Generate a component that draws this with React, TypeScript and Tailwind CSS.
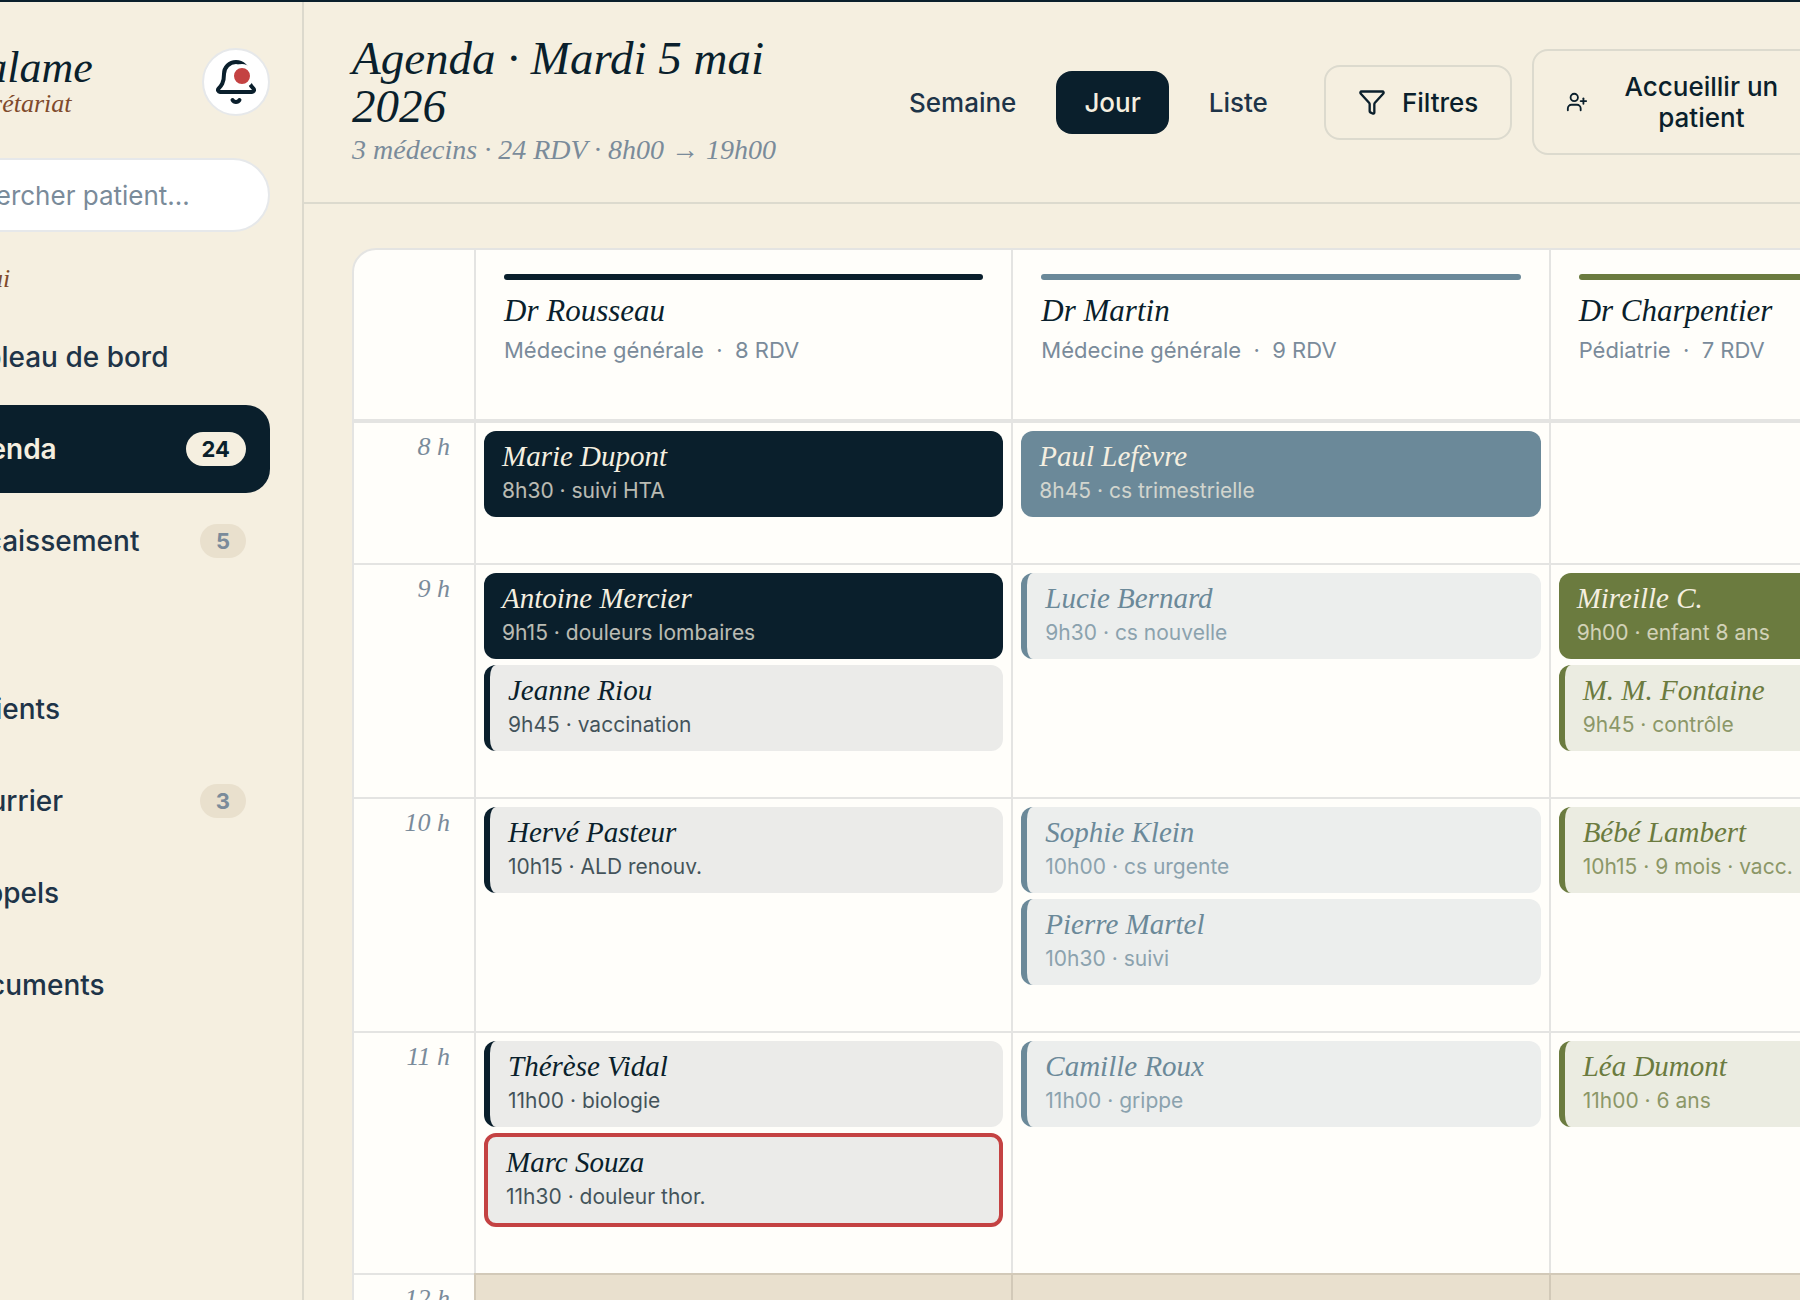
import clsx from "clsx";
import { Bell, Funnel, UserPlus } from "lucide-react";

const serif = "font-['Liberation_Serif',serif] italic";

type Tone = "navy" | "blue" | "green";

type Appointment = {
  name: string;
  time: string;
  reason: string;
  variant?: "solid" | "light" | "urgent";
};

const doctors: { name: string; specialty: string; count: number; tone: Tone }[] = [
  { name: "Dr Rousseau", specialty: "Médecine générale", count: 8, tone: "navy" },
  { name: "Dr Martin", specialty: "Médecine générale", count: 9, tone: "blue" },
  { name: "Dr Charpentier", specialty: "Pédiatrie", count: 7, tone: "green" },
];

// One array per doctor, in the same order as `doctors`.
const hours: { label: string; pause?: boolean; slots: Appointment[][] }[] = [
  {
    label: "8 h",
    slots: [
      [{ name: "Marie Dupont", time: "8h30", reason: "suivi HTA", variant: "solid" }],
      [{ name: "Paul Lefèvre", time: "8h45", reason: "cs trimestrielle", variant: "solid" }],
      [],
    ],
  },
  {
    label: "9 h",
    slots: [
      [
        { name: "Antoine Mercier", time: "9h15", reason: "douleurs lombaires", variant: "solid" },
        { name: "Jeanne Riou", time: "9h45", reason: "vaccination" },
      ],
      [{ name: "Lucie Bernard", time: "9h30", reason: "cs nouvelle" }],
      [
        { name: "Mireille C.", time: "9h00", reason: "enfant 8 ans", variant: "solid" },
        { name: "M. M. Fontaine", time: "9h45", reason: "contrôle" },
      ],
    ],
  },
  {
    label: "10 h",
    slots: [
      [{ name: "Hervé Pasteur", time: "10h15", reason: "ALD renouv." }],
      [
        { name: "Sophie Klein", time: "10h00", reason: "cs urgente" },
        { name: "Pierre Martel", time: "10h30", reason: "suivi" },
      ],
      [{ name: "Bébé Lambert", time: "10h15", reason: "9 mois · vacc." }],
    ],
  },
  {
    label: "11 h",
    slots: [
      [
        { name: "Thérèse Vidal", time: "11h00", reason: "biologie" },
        { name: "Marc Souza", time: "11h30", reason: "douleur thor.", variant: "urgent" },
      ],
      [{ name: "Camille Roux", time: "11h00", reason: "grippe" }],
      [{ name: "Léa Dumont", time: "11h00", reason: "6 ans" }],
    ],
  },
  { label: "12 h", pause: true, slots: [[], [], []] },
];

const barTone: Record<Tone, string> = {
  navy: "bg-[#0a1f2c]",
  blue: "bg-[#6b8999]",
  green: "bg-[#6b7b3f]",
};

const lightTone: Record<Tone, string> = {
  navy: "bg-[#ebebe9] border-[#0a1f2c] text-[#0a1f2c]",
  blue: "bg-[#eceeed] border-[#6b8999] text-[#6b8999]",
  green: "bg-[#ebece1] border-[#6b7b3f] text-[#6b7b3f]",
};

function AppointmentCard({ item, tone }: { item: Appointment; tone: Tone }) {
  const variant = item.variant ?? "light";
  return (
    <article
      className={clsx(
        "mb-[6px] rounded-xl px-[18px] py-[10px]",
        variant === "solid" && [barTone[tone], "text-[#f5efe0]"],
        variant === "light" && [lightTone[tone], "border-l-[6px]"],
        variant === "urgent" && "border-4 border-[#c44242] bg-[#ebebe9] text-[#0a1f2c]",
      )}
    >
      <h3 className={clsx(serif, "text-[29px] leading-[30px] font-normal")}>{item.name}</h3>
      <p className="mt-1 text-[21px] leading-8 whitespace-nowrap opacity-75">
        {item.time} · {item.reason}
      </p>
    </article>
  );
}

function NavItem({ label, badge, active }: { label: string; badge?: number; active?: boolean }) {
  return (
    <a
      href="#"
      aria-current={active ? "page" : undefined}
      className={clsx(
        "flex h-22 items-center justify-between rounded-3xl pr-6 pl-4 text-[28px]",
        active ? "bg-[#0a1f2c] font-semibold text-[#f5efe0]" : "font-medium text-[#1e3448]",
      )}
    >
      {label}
      {badge !== undefined && (
        <span
          className={clsx(
            "rounded-full px-4 text-[22px] leading-[34px] font-bold",
            active ? "bg-[#f5efe0] text-[#0a1f2c]" : "bg-[#e9e0cd] text-[#7a8b9a]",
          )}
        >
          {badge}
        </span>
      )}
    </a>
  );
}

function Sidebar() {
  return (
    <aside className="w-[304px] shrink-0 overflow-hidden border-r-2 border-[#dcd9cd] pr-8">
      <div className="mt-[46px] -ml-11 flex items-start justify-between">
        <div className={serif}>
          <p className="text-[44px] leading-10 font-medium text-[#0a1f2c]">Calame</p>
          <p className="text-[26px] leading-8 text-[#7f4a2c]">Secrétariat</p>
        </div>
        <button
          type="button"
          aria-label="Notifications"
          className="relative flex size-17 items-center justify-center rounded-full border-2 border-[#e6e8ea] bg-white text-[#0a1f2c]"
        >
          <Bell className="size-12" strokeWidth={2} />
          <span className="absolute top-[14px] right-[14px] size-6 rounded-full border-4 border-white bg-[#c44242]" />
        </button>
      </div>

      <input
        type="search"
        aria-label="Rechercher patient"
        placeholder="Rechercher patient…"
        className="mt-[38px] -ml-24 block h-[74px] w-[366px] rounded-full border-2 border-[#e6e8ea] bg-white pr-8 pl-7 text-[26px] placeholder:text-[#7a8b9a]"
      />

      <nav className="-ml-16">
        <h2 className={clsx(serif, "mt-[30px] mb-[18px] -ml-14 pl-1 text-[26px] leading-[33px] text-[#7f4a2c]")}>
          Aujourd’hui
        </h2>
        <div className="flex flex-col gap-1">
          <NavItem label="Tableau de bord" />
          <NavItem label="Agenda" badge={24} active />
          <NavItem label="Encaissement" badge={5} />
        </div>
        <div className="mt-20 flex flex-col gap-1">
          <NavItem label="Patients" />
          <NavItem label="Courrier" badge={3} />
          <NavItem label="Rappels" />
          <NavItem label="Documents" />
        </div>
      </nav>
    </aside>
  );
}

function Header() {
  return (
    <header className="flex items-center border-b-2 border-[#dcdace] px-12 py-8">
      <div className={clsx(serif, "mr-6 w-[505px] shrink-0 pr-12")}>
        <h1 className="text-[47px] leading-12 font-medium text-[#0a1f2c]">Agenda · Mardi 5 mai 2026</h1>
        <p className="text-[28px] leading-10 whitespace-nowrap text-[#7a8b9a]">
          3 médecins · 24 RDV · 8h00 → 19h00
        </p>
      </div>
      <div className="flex shrink-0 gap-3">
        {["Semaine", "Jour", "Liste"].map((view) => (
          <button
            key={view}
            type="button"
            aria-pressed={view === "Jour"}
            className={clsx(
              "rounded-2xl px-7 py-4 text-[26px] leading-[31px] font-medium",
              view === "Jour" ? "bg-[#0a1f2c] text-[#f5efe0]" : "text-[#1e3448]",
            )}
          >
            {view}
          </button>
        ))}
      </div>
      <button
        type="button"
        className="ml-7 flex shrink-0 items-center gap-4 rounded-2xl border-2 border-[#dcdace] px-8 py-5 text-[26px] leading-[31px] font-medium text-[#0a1f2c]"
      >
        <Funnel className="size-7" strokeWidth={2} />
        Filtres
      </button>
      <button
        type="button"
        className="ml-5 flex w-[300px] shrink-0 items-center gap-4 rounded-2xl border-2 border-[#dcdace] px-8 py-5 text-[26px] leading-[31px] font-medium text-[#0a1f2c]"
      >
        <UserPlus className="size-[22px] shrink-0" strokeWidth={2} />
        <span className="flex-1">Accueillir un patient</span>
      </button>
    </header>
  );
}

function Agenda() {
  return (
    <div className="mx-12 mt-11 overflow-hidden rounded-3xl border-2 border-[#e4e4e2] bg-[#fffefa]">
      <table className="w-full table-fixed border-separate border-spacing-0 text-left">
        <thead>
          <tr>
            <td className="w-[120px] border-b-4 border-[#e4e4e2]" />
            {doctors.map((doctor) => (
              <th
                key={doctor.name}
                scope="col"
                className="h-[173px] border-b-4 border-l-2 border-[#e4e4e2] px-7 pt-6 align-top font-normal"
              >
                <div className={clsx("h-[6px] rounded-full", barTone[doctor.tone])} />
                <p className={clsx(serif, "mt-3 text-[31px] leading-[38px] text-[#0a1f2c]")}>{doctor.name}</p>
                <p className="mt-1 text-[22px] leading-8 text-[#7a8b9a]">
                  {doctor.specialty} &nbsp;·&nbsp; {doctor.count} RDV
                </p>
              </th>
            ))}
          </tr>
        </thead>
        <tbody>
          {hours.map((hour, row) => (
            <tr key={hour.label}>
              <th
                scope="row"
                className={clsx(
                  serif,
                  "border-[#e4e4e2] pt-2 pr-6 text-right align-top text-[26px] leading-8 font-normal text-[#7a8b9a]",
                  row > 0 && "border-t-2",
                )}
              >
                {hour.label}
              </th>
              {hour.slots.map((items, col) => (
                <td
                  key={col}
                  className={clsx(
                    "h-[140px] border-l-2 px-2 pt-2 pb-10 align-top",
                    hour.pause ? "border-[#d2c9b8] bg-[#e9e0ce]" : "border-[#e4e4e2]",
                    row > 0 && "border-t-2",
                  )}
                >
                  {items.map((item) => (
                    <AppointmentCard key={item.name} item={item} tone={doctors[col].tone} />
                  ))}
                </td>
              ))}
            </tr>
          ))}
        </tbody>
      </table>
    </div>
  );
}

export default function App() {
  return (
    <div className="flex h-screen overflow-hidden border-t-2 border-[#0a1f2c] bg-[#f5efe0] font-['Inter',sans-serif]">
      <Sidebar />
      <main className="min-w-0 flex-1 overflow-hidden">
        {/* Three doctor columns need room; the board runs past narrow windows */}
        <div className="min-w-[1832px]">
          <Header />
          <Agenda />
        </div>
      </main>
    </div>
  );
}
